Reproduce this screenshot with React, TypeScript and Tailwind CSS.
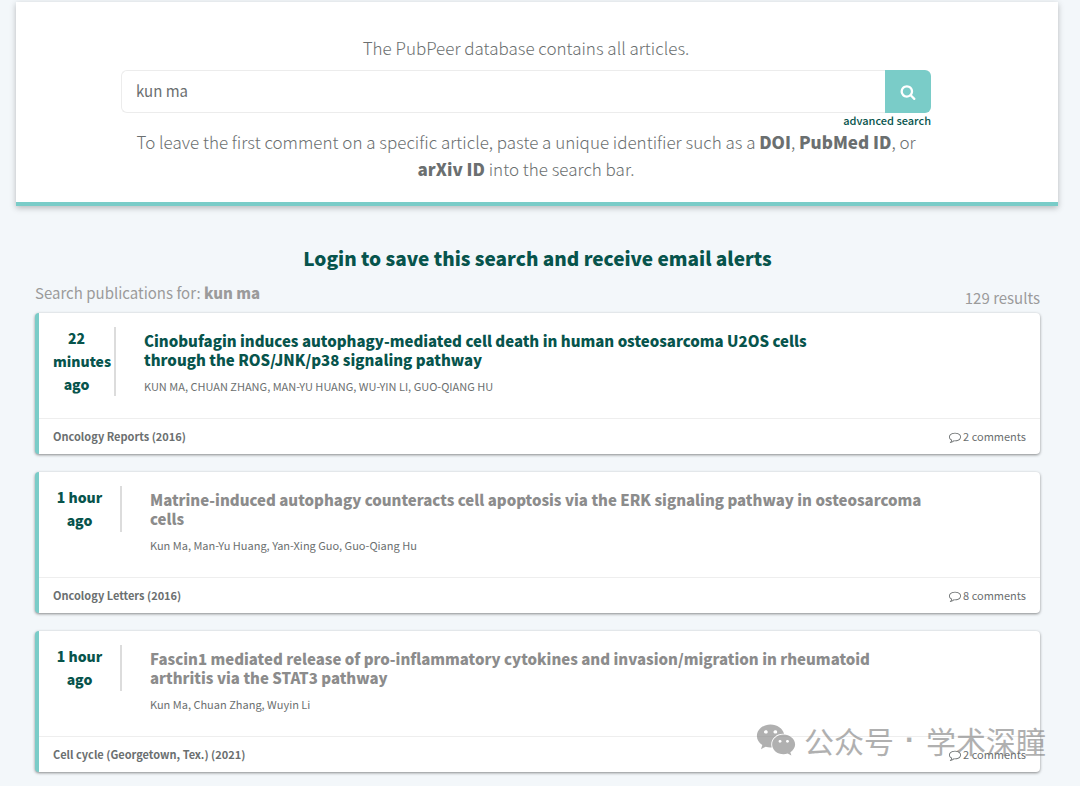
import { useState } from 'react';
import { FaWeixin } from 'react-icons/fa';

interface Publication {
  id: number;
  time: string;
  title: string;
  authors: string;
  journal: string;
  comments: number;
  unread: boolean;
}

const publications: Publication[] = [
  {
    id: 1,
    time: '22 minutes ago',
    title:
      'Cinobufagin induces autophagy-mediated cell death in human osteosarcoma U2OS cells through the ROS/JNK/p38 signaling pathway',
    authors: 'KUN MA, CHUAN ZHANG, MAN-YU HUANG, WU-YIN LI, GUO-QIANG HU',
    journal: 'Oncology Reports (2016)',
    comments: 2,
    unread: true,
  },
  {
    id: 2,
    time: '1 hour ago',
    title:
      'Matrine-induced autophagy counteracts cell apoptosis via the ERK signaling pathway in osteosarcoma cells',
    authors: 'Kun Ma, Man-Yu Huang, Yan-Xing Guo, Guo-Qiang Hu',
    journal: 'Oncology Letters (2016)',
    comments: 8,
    unread: false,
  },
  {
    id: 3,
    time: '1 hour ago',
    title:
      'Fascin1 mediated release of pro-inflammatory cytokines and invasion/migration in rheumatoid arthritis via the STAT3 pathway',
    authors: 'Kun Ma, Chuan Zhang, Wuyin Li',
    journal: 'Cell cycle (Georgetown, Tex.) (2021)',
    comments: 2,
    unread: false,
  },
];

function SearchIcon() {
  return (
    <svg viewBox="0 0 1792 1792" className="w-4 h-4 fill-current" aria-hidden="true">
      <path d="M1216 832q0-185-131.500-316.500t-316.500-131.500-316.500 131.500-131.500 316.500 131.500 316.500 316.500 131.500 316.500-131.500 131.500-316.500zm512 832q0 52-38 90t-90 38q-54 0-90-38l-343-342q-179 124-399 124-143 0-273.500-55.500t-225-150-150-225-55.500-273.500 55.500-273.500 150-225 225-150 273.500-55.500 273.500 55.500 225 150 150 225 55.500 273.500q0 220-124 399l343 343q37 37 37 90z" />
    </svg>
  );
}

function CommentIcon() {
  return (
    <svg viewBox="0 0 1792 1792" className="w-3 h-3 fill-current" aria-hidden="true">
      <path d="M896 384q-204 0-381.500 69.500t-282 187.500-104.500 255q0 112 71.500 213.500t201.500 175.500l87 50-27 96q-24 91-70 172 152-63 275-171l43-38 57 6q69 8 130 8 204 0 381.500-69.500t282-187.500 104.500-255-104.500-255-282-187.500-381.500-69.500zm896 512q0 174-120 321.500t-326 233-450 85.500q-70 0-145-8-198 175-460 242-49 14-114 22h-5q-15 0-27-10.500t-16-27.500v-1q-3-4-.5-12t2-10 4.500-9.500l6-9 7-8.500 8-9q7-8 31-34.500t34.500-38 31-39.500 32.500-51 27-59 26-76q-157-89-247.500-220t-90.500-281q0-174 120-321.500t326-233 450-85.500 450 85.500 326 233 120 321.500z" />
    </svg>
  );
}

function PublicationCard({ item }: { item: Publication }) {
  return (
    <article className="bg-white rounded border-l-4 border-[#7accc8] shadow-[0_1px_3px_rgba(0,0,0,0.45)]">
      <div className="flex items-start min-h-[105px] pt-3.5 px-3.5">
        <div
          className={`shrink-0 pr-3.5 border-r-2 border-[#dcdcdc] text-center text-[14px] leading-[23px] font-black text-[#07544c] ${
            item.unread ? 'w-[63px]' : 'w-[69px]'
          }`}
        >
          {item.time}
        </div>
        <div className={`pt-1 ml-7 ${item.unread ? 'max-w-[700px]' : 'max-w-[780px]'}`}>
          <h3 className="text-[15px] leading-[19px] font-black">
            <a href="#" className={item.unread ? 'text-[#07544c]' : 'text-[#8c8c8c]'}>
              {item.title}
            </a>
          </h3>
          <p className="mt-2 text-[11px] leading-[18px] text-[#6b6f70]">{item.authors}</p>
        </div>
      </div>
      <div className="flex items-center justify-between h-9 px-3.5 border-t border-[#eeeeee] text-[11px] text-[#6b6f70]">
        <span className="font-bold">{item.journal}</span>
        <a href="#" className="flex items-center gap-0.5">
          <CommentIcon />
          {item.comments} comments
        </a>
      </div>
    </article>
  );
}

export default function App() {
  const [query, setQuery] = useState('kun ma');

  return (
    <div className="min-h-screen bg-[#f3f7fa] pt-0.5 pb-3 pl-4 pr-[22px] font-['Noto_Sans_CJK_SC',sans-serif] text-[#6b6f70]">
      <section className="bg-white border-b-4 border-[#7accc8] shadow-[0_2px_6px_rgba(0,0,0,0.25)] pt-8 pb-5 pl-[105px] pr-[127px]">
        <p className="text-center text-[17px] leading-[27px] font-light">
          The PubPeer database contains all articles.
        </p>
        <form className="flex mt-[9px] h-[43px]" onSubmit={(e) => e.preventDefault()}>
          <input
            type="text"
            aria-label="Search publications"
            value={query}
            onChange={(e) => setQuery(e.target.value)}
            className="flex-1 min-w-0 px-3.5 rounded-l-md border border-r-0 border-[#ececec] text-[15px] outline-none"
          />
          <button
            type="submit"
            aria-label="Search"
            className="w-[46px] flex items-center justify-center rounded-r-md bg-[#7accc8] text-white"
          >
            <SearchIcon />
          </button>
        </form>
        <div className="flex justify-end text-[11px] leading-[15px]">
          <a href="#" className="font-medium text-[#07544c]">
            advanced search
          </a>
        </div>
        <p className="text-center text-[17px] leading-[27px] font-light">
          To leave the first comment on a specific article, paste a unique identifier such as a{' '}
          <strong className="font-black">DOI</strong>, <strong className="font-black">PubMed ID</strong>, or{' '}
          <strong className="font-black">arXiv ID</strong> into the search bar.
        </p>
      </section>

      <main className="relative pl-[19px] pr-[18px] pt-[37px]">
        <h2 className="text-center text-[19px] leading-[30px] font-black">
          <a href="#" className="text-[#07544c]">
            Login to save this search and receive email alerts
          </a>
        </h2>
        <div className="flex items-end justify-between mt-2 mb-1 text-[#9b9b9b]">
          <p className="text-[15px] leading-[24px] pb-1">
            Search publications for: <strong className="font-black">kun ma</strong>
          </p>
          <p className="text-[15px] leading-[22px]">129 results</p>
        </div>
        <div className="flex flex-col gap-[18px]">
          {publications.map((item) => (
            <PublicationCard key={item.id} item={item} />
          ))}
        </div>

        <div className="absolute right-3 bottom-3.5 flex items-center gap-2 text-[#7d7d7d] opacity-60 pointer-events-none">
          <FaWeixin className="w-10 h-9" />
          <span className="text-[30px] leading-[36px] flex">
            公众号
            <span className="px-[11px] font-bold font-['Liberation_Sans',sans-serif]">·</span>
            学术深瞳
          </span>
        </div>
      </main>
    </div>
  );
}
